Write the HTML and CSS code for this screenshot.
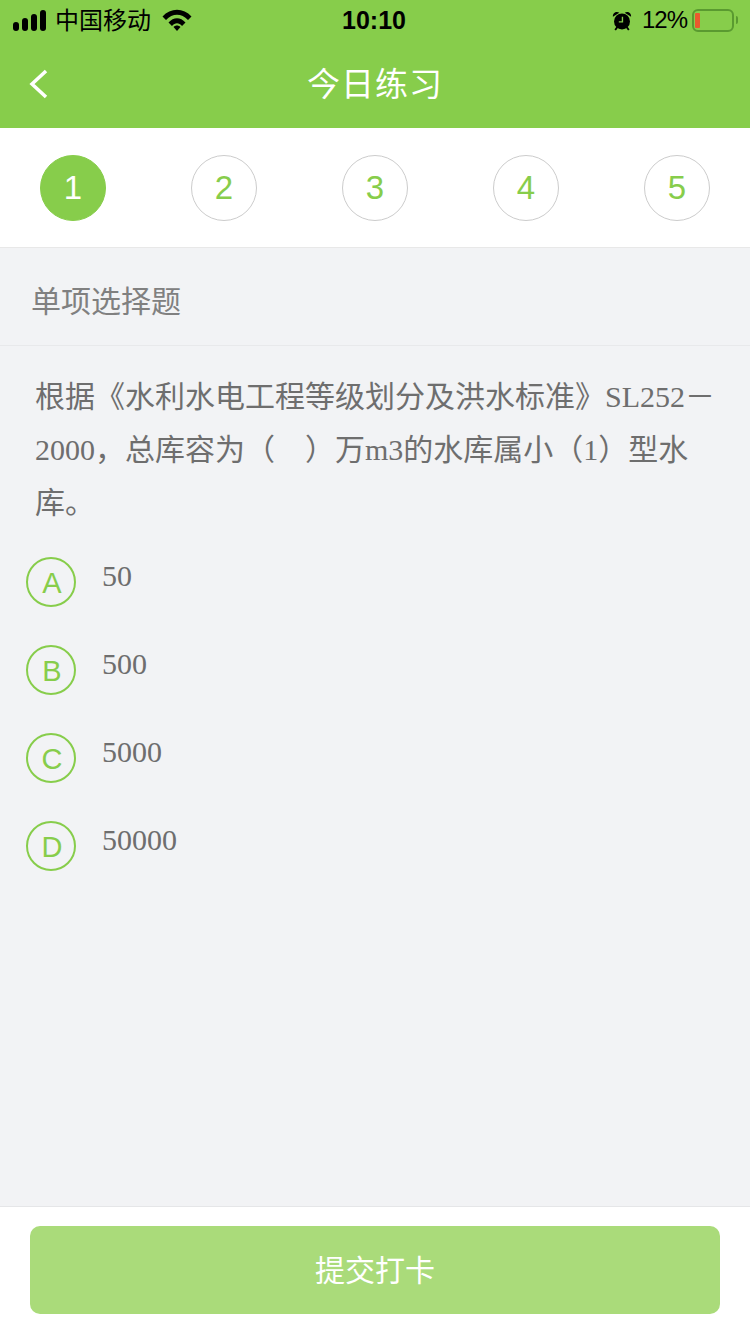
FILE: index.html
```html
<!DOCTYPE html>
<html>
<head>
  <meta charset="utf-8">
  <title>今日练习</title>
  <link rel="stylesheet" href="styles.css">
</head>
<body>
  <div class="page">
    <div class="header">
      <div class="status">
        <div class="status-left">
          <svg class="signal" width="33" height="21" viewBox="0 0 33 21">
            <rect x="0" y="12" width="6" height="9" rx="3"/>
            <rect x="9" y="8" width="6" height="13" rx="3"/>
            <rect x="18" y="4" width="6" height="17" rx="3"/>
            <rect x="27" y="0" width="6" height="21" rx="3"/>
          </svg>
          <span class="carrier">中国移动</span>
          <svg class="wifi" width="30" height="22" viewBox="0 0 30 22">
            <path d="M0.500 7.500C8.500 -1.500 21.500 -1.500 29.500 7.500L26 11C19.500 4 10.500 4 4 11Z"/>
            <path d="M6.500 13.500C11.500 7.700 18.500 7.700 23.500 13.500L20 17C17 13.300 13 13.300 10 17Z"/>
            <path d="M11.500 18C13.500 16 16.500 16 18.500 18L15 22Z"/>
          </svg>
        </div>
        <div class="time">10:10</div>
        <div class="status-right">
          <svg class="alarm" width="20" height="21" viewBox="0 0 22 22">
            <circle cx="11" cy="12" r="8.800"/>
            <path d="M1 7C0.500 2.500 5 0.500 8 2.500ZM21 7C21.500 2.500 17 0.500 14 2.500Z"/>
            <path d="M3.500 21.500L6 18M18.500 21.500L16 18" stroke="#000" stroke-width="2"/>
            <path d="M11.500 7V12.500H7.500" fill="none" stroke="#87cd4b" stroke-width="1.500"/>
          </svg>
          <span class="percent">12%</span>
          <div class="battery"><div class="battery-level"></div></div>
          <div class="battery-cap"></div>
        </div>
      </div>
      <div class="nav">
        <svg class="back" width="20" height="32" viewBox="0 0 20 32">
          <path d="M18 3L4 16L18 29" fill="none" stroke="#fff" stroke-width="3.500"/>
        </svg>
        <div class="nav-title">今日练习</div>
      </div>
    </div>

    <div class="steps">
      <div class="step step-on">1</div>
      <div class="step">2</div>
      <div class="step">3</div>
      <div class="step">4</div>
      <div class="step">5</div>
    </div>

    <div class="main">
      <div class="qtype">单项选择题</div>
      <div class="question">根据《水利水电工程等级划分及洪水标准》SL252－2000，总库容为（　）万m3的水库属小（1）型水库。</div>
      <div class="options">
        <div class="option"><div class="letter">A</div><div class="answer">50</div></div>
        <div class="option"><div class="letter">B</div><div class="answer">500</div></div>
        <div class="option"><div class="letter">C</div><div class="answer">5000</div></div>
        <div class="option"><div class="letter">D</div><div class="answer">50000</div></div>
      </div>
    </div>

    <div class="footer">
      <div class="submit">提交打卡</div>
    </div>
  </div>
</body>
</html>
```
FILE: styles.css
```css
* {
  box-sizing: border-box;
}

html, body {
  margin: 0;
  padding: 0;
}

.page {
  width: 750px;
  height: 1334px;
  display: flex;
  flex-direction: column;
  background: #f2f3f5;
  font-family: "Liberation Serif", "Noto Sans CJK SC", serif;
  overflow: hidden;
}

.header {
  height: 128px;
  background: #87cd4b;
}

.status {
  height: 40px;
  padding: 0 12px 0 13px;
  display: flex;
  align-items: center;
  justify-content: space-between;
  position: relative;
  font-family: "Liberation Sans", "Noto Sans CJK SC", sans-serif;
  color: #000;
}

.status-left, .status-right {
  display: flex;
  align-items: center;
}

.carrier {
  font-size: 24px;
  margin: -4px 0 0 9px;
}

.wifi {
  margin-left: 11px;
}

.time {
  position: absolute;
  left: 0;
  right: 2px;
  text-align: center;
  font-size: 25px;
  font-weight: bold;
}

.percent {
  font-size: 24px;
  letter-spacing: -1px;
  margin-left: 10px;
}

.battery {
  width: 42px;
  height: 23px;
  margin-left: 5px;
  padding: 2px 1px;
  border: 2px solid #5a9a30;
  border-radius: 6px;
}

.battery-level {
  width: 5px;
  height: 100%;
  background: #ea5a2e;
  border-radius: 1px;
}

.battery-cap {
  width: 2px;
  height: 8px;
  margin-left: 2px;
  background: #5a9a30;
  border-radius: 0 2px 2px 0;
}

.nav {
  height: 88px;
  padding-bottom: 4px;
  display: flex;
  align-items: center;
  justify-content: center;
  position: relative;
}

.back {
  position: absolute;
  left: 28px;
  top: 28px;
}

.nav-title {
  color: #fff;
  font-size: 33px;
  font-family: "Noto Sans CJK SC", sans-serif;
  letter-spacing: 1px;
}

.steps {
  height: 120px;
  padding: 27px 40px 0;
  display: flex;
  justify-content: space-between;
  align-items: flex-start;
  background: #fff;
  border-bottom: 1px solid #e8e8e8;
}

.step {
  width: 66px;
  height: 66px;
  border: 1px solid #ccc;
  border-radius: 50%;
  display: flex;
  align-items: center;
  justify-content: center;
  color: #87cd4b;
  font-size: 33px;
  font-family: "Liberation Sans", sans-serif;
}

.step-on {
  background: #87cd4b;
  border-color: #87cd4b;
  color: #fff;
}

.main {
  flex: 1;
}

.qtype {
  height: 98px;
  padding: 5px 31px 0;
  display: flex;
  align-items: center;
  border-bottom: 1px solid #e8e9eb;
  color: #808080;
  font-size: 30px;
  font-family: "Noto Sans CJK SC", sans-serif;
}

.question {
  padding: 24px 35px 0;
  color: #6e6e6e;
  font-size: 30px;
  line-height: 53px;
}

.options {
  padding: 28px 0 0 26px;
}

.option {
  height: 88px;
  display: flex;
  align-items: flex-start;
}

.letter {
  width: 50px;
  height: 50px;
  padding: 2px 0 0 2px;
  border: 2px solid #87cd4b;
  border-radius: 50%;
  display: flex;
  align-items: center;
  justify-content: center;
  color: #87cd4b;
  font-size: 29px;
  font-family: "Liberation Sans", sans-serif;
}

.answer {
  margin-left: 26px;
  color: #6e6e6e;
  font-size: 30px;
  line-height: 38px;
}

.footer {
  height: 128px;
  padding: 19px 30px 0;
  background: #fff;
  border-top: 1px solid #e5e6e8;
}

.submit {
  height: 88px;
  padding-bottom: 4px;
  border-radius: 10px;
  background: #aadb7a;
  color: #fff;
  display: flex;
  align-items: center;
  justify-content: center;
  font-size: 30px;
  font-family: "Noto Sans CJK SC", sans-serif;
}
```
